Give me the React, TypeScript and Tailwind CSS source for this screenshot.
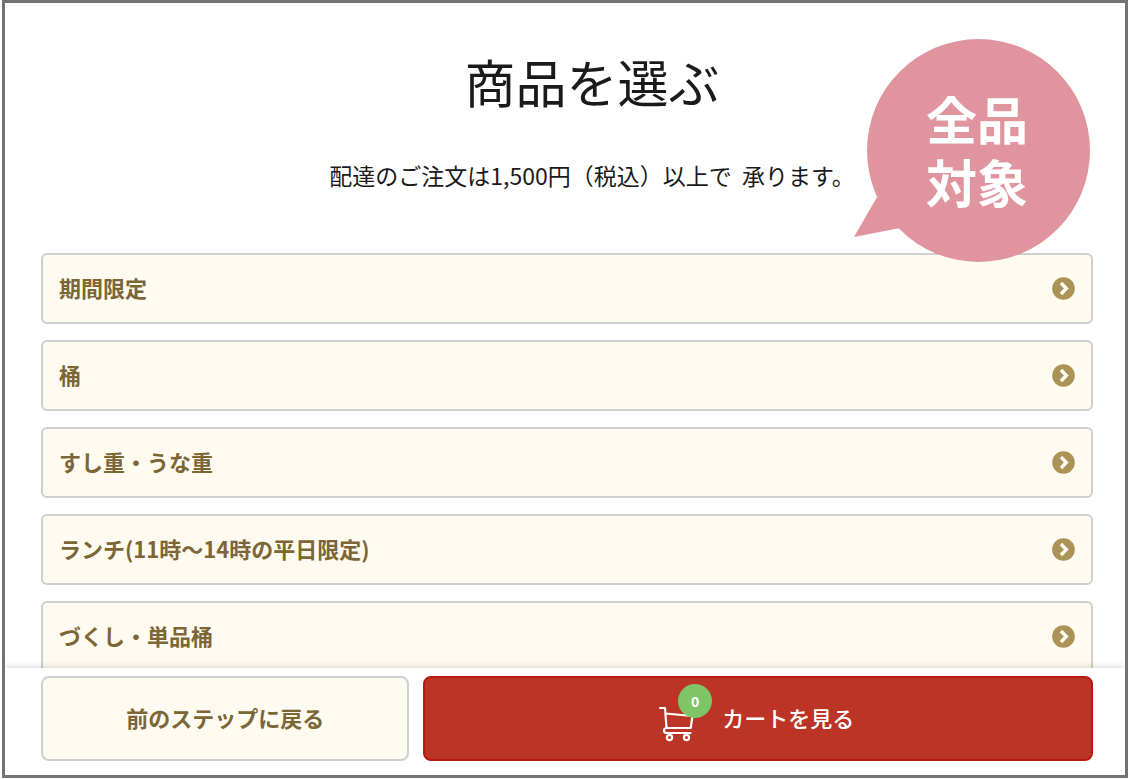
import React from 'react';

const CATEGORIES = [
  '期間限定',
  '桶',
  'すし重・うな重',
  'ランチ(11時〜14時の平日限定)',
  'づくし・単品桶',
];

const ChevronBadge: React.FC = () => (
  <svg className="w-6 h-6 shrink-0" viewBox="0 0 24 24" fill="none" aria-hidden="true">
    <circle cx="12.5" cy="12.5" r="11.3" fill="#ab9358" />
    <path d="M10 7l5.300 5.500-5.300 5.500" stroke="#fffdf4" strokeWidth={3.4} />
  </svg>
);

const CartIcon: React.FC = () => (
  <svg className="w-9 h-9" viewBox="0 0 36 36" fill="none" stroke="#fff" strokeWidth={2.2} aria-hidden="true">
    <path
      strokeLinecap="round"
      strokeLinejoin="round"
      d="M2 2h5l1.500 20M7.500 7.500L34.500 10l-1.800 12H9c-2 0-3 1-3 2.500S7 27 8.500 27h24"
    />
    <circle cx="11.500" cy="31.500" r="2.600" />
    <circle cx="28.500" cy="31.500" r="2.600" />
  </svg>
);

const CategoryLink: React.FC<{ label: string }> = ({ label }) => (
  <li>
    <a
      href="#"
      className="flex items-center justify-between h-[71px] px-4 pb-0.5 rounded-md border-2 border-[#cfcfcf] bg-[#fffbf0] text-[22px] font-bold text-[#7c6636]"
    >
      {label}
      <ChevronBadge />
    </a>
  </li>
);

const SpeechBubble: React.FC = () => (
  <div className="absolute top-9 right-[35px] w-[236px] h-[223px]">
    <svg className="absolute inset-0 w-full h-full" viewBox="0 0 236 223" fill="#e0959e" aria-hidden="true">
      <circle cx="124.5" cy="111.5" r="111.5" />
      <path d="M23 158L0 198l46-9z" />
    </svg>
    <p className="relative flex flex-col h-full items-center justify-center pl-2.5 pb-0.5 text-[51px] leading-[63px] font-bold text-white">
      <span>全品</span>
      <span>対象</span>
    </p>
  </div>
);

export default function App() {
  return (
    <div className="h-screen px-0.5 pb-px bg-white font-['Noto_Sans_CJK_JP',sans-serif]">
      <div className="relative flex flex-col h-full overflow-hidden border-[3px] border-[#737373]">
        <main className="flex-1 min-h-0 overflow-hidden pl-9 pr-8">
          <header className="pt-[42px] pl-[50px] text-center text-[#1a1a1a]">
            <h1 className="text-[51px] leading-[72px]">商品を選ぶ</h1>
            <p className="mt-10 text-[23px] leading-9">
              配達のご注文は1,500円（税込）以上で{'\u00a0\u00a0'}承ります。
            </p>
          </header>

          <ul className="flex flex-col gap-4 mt-[60px]">
            {CATEGORIES.map((label) => (
              <CategoryLink key={label} label={label} />
            ))}
          </ul>
        </main>

        <footer className="relative grid grid-cols-[11fr_20fr] gap-3.5 pl-9 pr-8 pt-2 pb-[14px] bg-white shadow-[0_0_8px_rgba(0,0,0,0.2)]">
          <button
            type="button"
            className="h-[85px] pb-0.5 rounded-lg border-2 border-[#cfcfcf] bg-[#fffbf0] text-[22px] font-bold text-[#7c6636]"
          >
            前のステップに戻る
          </button>
          <button
            type="button"
            className="flex items-center justify-center gap-7 h-[85px] pr-1 pb-0.5 rounded-lg border-2 border-[#b51a0c] bg-[#bc3425] text-[22px] font-medium text-white"
          >
            <span className="relative pt-3">
              <CartIcon />
              <span className="absolute -top-2.5 left-5 flex items-center justify-center w-[34px] h-[34px] rounded-full bg-[#80c468] text-sm font-bold">
                0
              </span>
            </span>
            カートを見る
          </button>
        </footer>

        <SpeechBubble />
      </div>
    </div>
  );
}
